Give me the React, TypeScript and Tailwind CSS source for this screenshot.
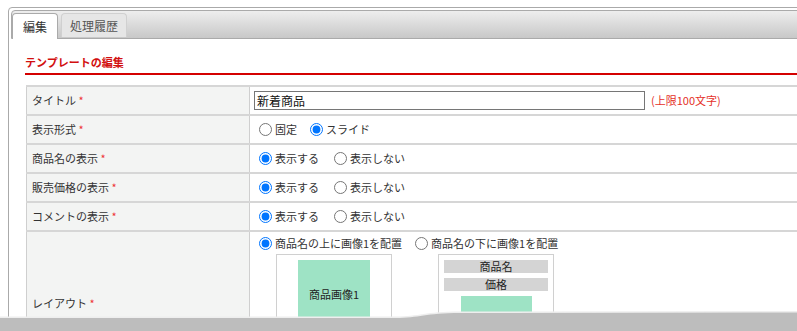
import React from 'react';

const displayRows = [
  { label: '商品名の表示', name: 'showName' },
  { label: '販売価格の表示', name: 'showPrice' },
  { label: 'コメントの表示', name: 'showComment' },
];

function Radio({ checked, name }: { checked?: boolean; name: string }) {
  return (
    <input
      type="radio"
      name={name}
      defaultChecked={checked}
      className="m-0 h-[13px] w-[13px] shrink-0"
    />
  );
}

function Label({ text }: { text: string }) {
  return (
    <td className="w-[223px] border-l border-r border-[#cfcfcf] bg-[#f3f4f3] pl-[5px] align-middle text-[#333]">
      {text} <span className="text-[#e33]">*</span>
    </td>
  );
}

export default function App() {
  return (
    <div className="relative h-[331px] w-[797px] overflow-hidden bg-white font-['Noto_Sans_CJK_JP','Liberation_Sans',sans-serif] text-[11px] text-[#333]">
      <div className="ml-[8px] mt-[7px] h-[400px] w-[1000px] rounded-tl-[4px] border border-[#aaa] p-[2px]">
        {/* Tabs */}
        <div className="flex h-[29px] items-end gap-[3px] rounded-tl-[4px] border border-[#aaa] bg-gradient-to-b from-[#eeeeee] to-[#c8c8c8] text-[12px]">
          <div className="-mb-px flex h-[26px] w-[46px] items-center justify-center rounded-t-[4px] border border-b-0 border-[#aaa] bg-white text-[#333]">
            編集
          </div>
          <div className="mb-[1px] flex h-[24px] w-[66px] items-center justify-center rounded-t-[4px] border border-b-0 border-[#d0d0d0] bg-[#e6e6e6] text-[#555]">
            処理履歴
          </div>
        </div>

        {/* Content */}
        <div className="pl-[14px] pt-[15px]">
          <h2 className="text-[11px] font-bold leading-[16px] text-[#d21010]">テンプレートの編集</h2>
          <div className="mt-[3px] h-[2px] bg-[#d40000]" />

          <table className="ml-[1px] mt-[10px] w-full border-collapse">
            <tbody>
              <tr className="h-[29px] border-y-2 border-[#d6d6d6]">
                <Label text="タイトル" />
                <td className="pl-[4px]">
                  <div className="flex items-center gap-[6px]">
                    <div className="flex h-[19px] w-[391px] items-center border border-[#767676] px-[2px] text-[12px] text-[#111]">
                      新着商品
                    </div>
                    <span className="text-[#e5322a]">(上限100文字)</span>
                  </div>
                </td>
              </tr>
              <tr className="h-[29px] border-b-2 border-[#d6d6d6]">
                <Label text="表示形式" />
                <td className="pl-[9px]">
                  <div className="flex items-center">
                    <Radio name="format" />
                    <span className="ml-[3px]">固定</span>
                    <span className="ml-[13px]" />
                    <Radio name="format" checked />
                    <span className="ml-[3px]">スライド</span>
                  </div>
                </td>
              </tr>
              {displayRows.map((row) => (
                <tr key={row.name} className="h-[29px] border-b-2 border-[#d6d6d6]">
                  <Label text={row.label} />
                  <td className="pl-[9px]">
                    <div className="flex items-center">
                      <Radio name={row.name} checked />
                      <span className="ml-[3px]">表示する</span>
                      <span className="ml-[15px]" />
                      <Radio name={row.name} />
                      <span className="ml-[3px]">表示しない</span>
                    </div>
                  </td>
                </tr>
              ))}
              <tr className="h-[144px] border-b-2 border-[#d6d6d6]">
                <Label text="レイアウト" />
                <td className="pl-[9px] pt-[3px] align-top">
                  <div className="flex items-center">
                    <Radio name="layout" checked />
                    <span className="ml-[3px]">商品名の上に画像1を配置</span>
                    <span className="ml-[13px]" />
                    <Radio name="layout" />
                    <span className="ml-[3px]">商品名の下に画像1を配置</span>
                  </div>
                  <div className="mt-[2px] flex">
                    <div className="ml-[17px] h-[120px] w-[116px] border border-[#d0d0d0] pt-[5px]">
                      <div className="ml-[21px] flex h-[100px] w-[72px] items-center justify-center bg-[#9ee3c5] pb-[30px] text-[#222]">
                        商品画像1
                      </div>
                    </div>
                    <div className="ml-[46px] flex h-[120px] w-[116px] flex-col border border-[#d0d0d0] px-[5px] pt-[5px]">
                      <div className="flex h-[13px] items-center justify-center bg-[#d4d4d4] text-[#222]">商品名</div>
                      <div className="mt-[5px] flex h-[13px] items-center justify-center bg-[#d4d4d4] text-[#222]">価格</div>
                      <div className="ml-[17px] mt-[5px] h-[60px] w-[71px] bg-[#9ee3c5]" />
                    </div>
                  </div>
                </td>
              </tr>
            </tbody>
          </table>
        </div>
      </div>

      {/* torn bottom edge */}
      <svg className="absolute bottom-0 left-0" width="797" height="22" viewBox="0 309 797 22">
        <path d="M0 318 L395 318 C420 318 425 313 460 313 L797 312.5 L797 331 L0 331 Z" fill="#eeeeee" transform="translate(0 -1.5)" />
        <path d="M0 318 L395 318 C420 318 425 313 460 313 L797 312.5 L797 331 L0 331 Z" fill="#bdbdbd" />
      </svg>
    </div>
  );
}
